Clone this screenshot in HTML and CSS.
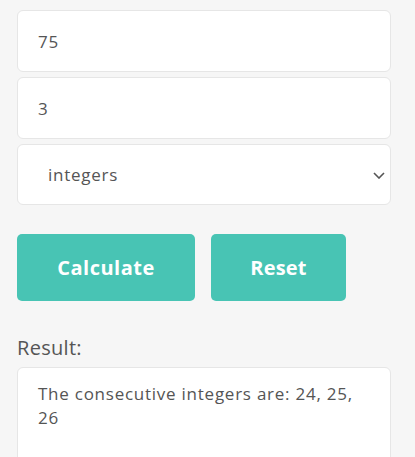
FILE: index.html
```html
<!DOCTYPE html>
<html>
<head>
<meta charset="utf-8">
<link rel="stylesheet" href="styles.css">
</head>
<body>
<div class="calc">
  <input class="field" type="text" value="75">
  <input class="field" type="text" value="3">
  <div class="select-wrap">
    <select class="field select">
      <option>integers</option>
    </select>
    <svg class="chev" width="12" height="7" viewBox="0 0 12 7"><path d="M1 1l5 5 5-5" fill="none" stroke="#555" stroke-width="1.6"/></svg>
  </div>
  <div class="actions">
    <button class="btn btn-calc">Calculate</button>
    <button class="btn btn-reset">Reset</button>
  </div>
  <div class="label">Result:</div>
  <div class="result">The consecutive integers are: 24, 25, 26</div>
</div>
</body>
</html>
```
FILE: styles.css
```css
html, body {
  margin: 0;
  background: #f6f6f6;
}
body {
  font-family: "Open Sans", "Liberation Sans", sans-serif;
  color: #555;
}
.calc {
  width: 374px;
  padding: 10px 0 0 17px;
  display: flex;
  flex-direction: column;
}
.field {
  box-sizing: border-box;
  width: 374px;
  height: 62px;
  margin: 0 0 5px 0;
  padding: 0 20px;
  border: 1px solid #e6e6e6;
  border-radius: 6px;
  background: #fff;
  font-family: inherit;
  font-size: 17px;
  letter-spacing: 0.75px;
  color: #555;
  outline: none;
}
.select-wrap {
  position: relative;
}
.select {
  -webkit-appearance: none;
  appearance: none;
  height: 61px;
  padding-left: 30px;
}
.chev {
  position: absolute;
  right: 6px;
  top: 28px;
}
.actions {
  display: flex;
  gap: 16px;
  margin-top: 24px;
}
.btn {
  height: 67px;
  border: none;
  border-radius: 5px;
  background: #48c4b4;
  color: #fff;
  font-family: inherit;
  font-weight: 700;
  font-size: 20px;
  letter-spacing: 0.2px;
}
.btn-calc { width: 178px; letter-spacing: 0.5px; }
.btn-reset { width: 135px; }
.label {
  margin-top: 34px;
  font-size: 20px;
  line-height: 26px;
  letter-spacing: 0.3px;
}
.result {
  box-sizing: border-box;
  margin-top: 6px;
  width: 374px;
  min-height: 130px;
  padding: 14px 20px;
  border: 1px solid #e6e6e6;
  border-radius: 6px;
  background: #fff;
  font-size: 17px;
  letter-spacing: 0.75px;
  line-height: 24px;
}
```
